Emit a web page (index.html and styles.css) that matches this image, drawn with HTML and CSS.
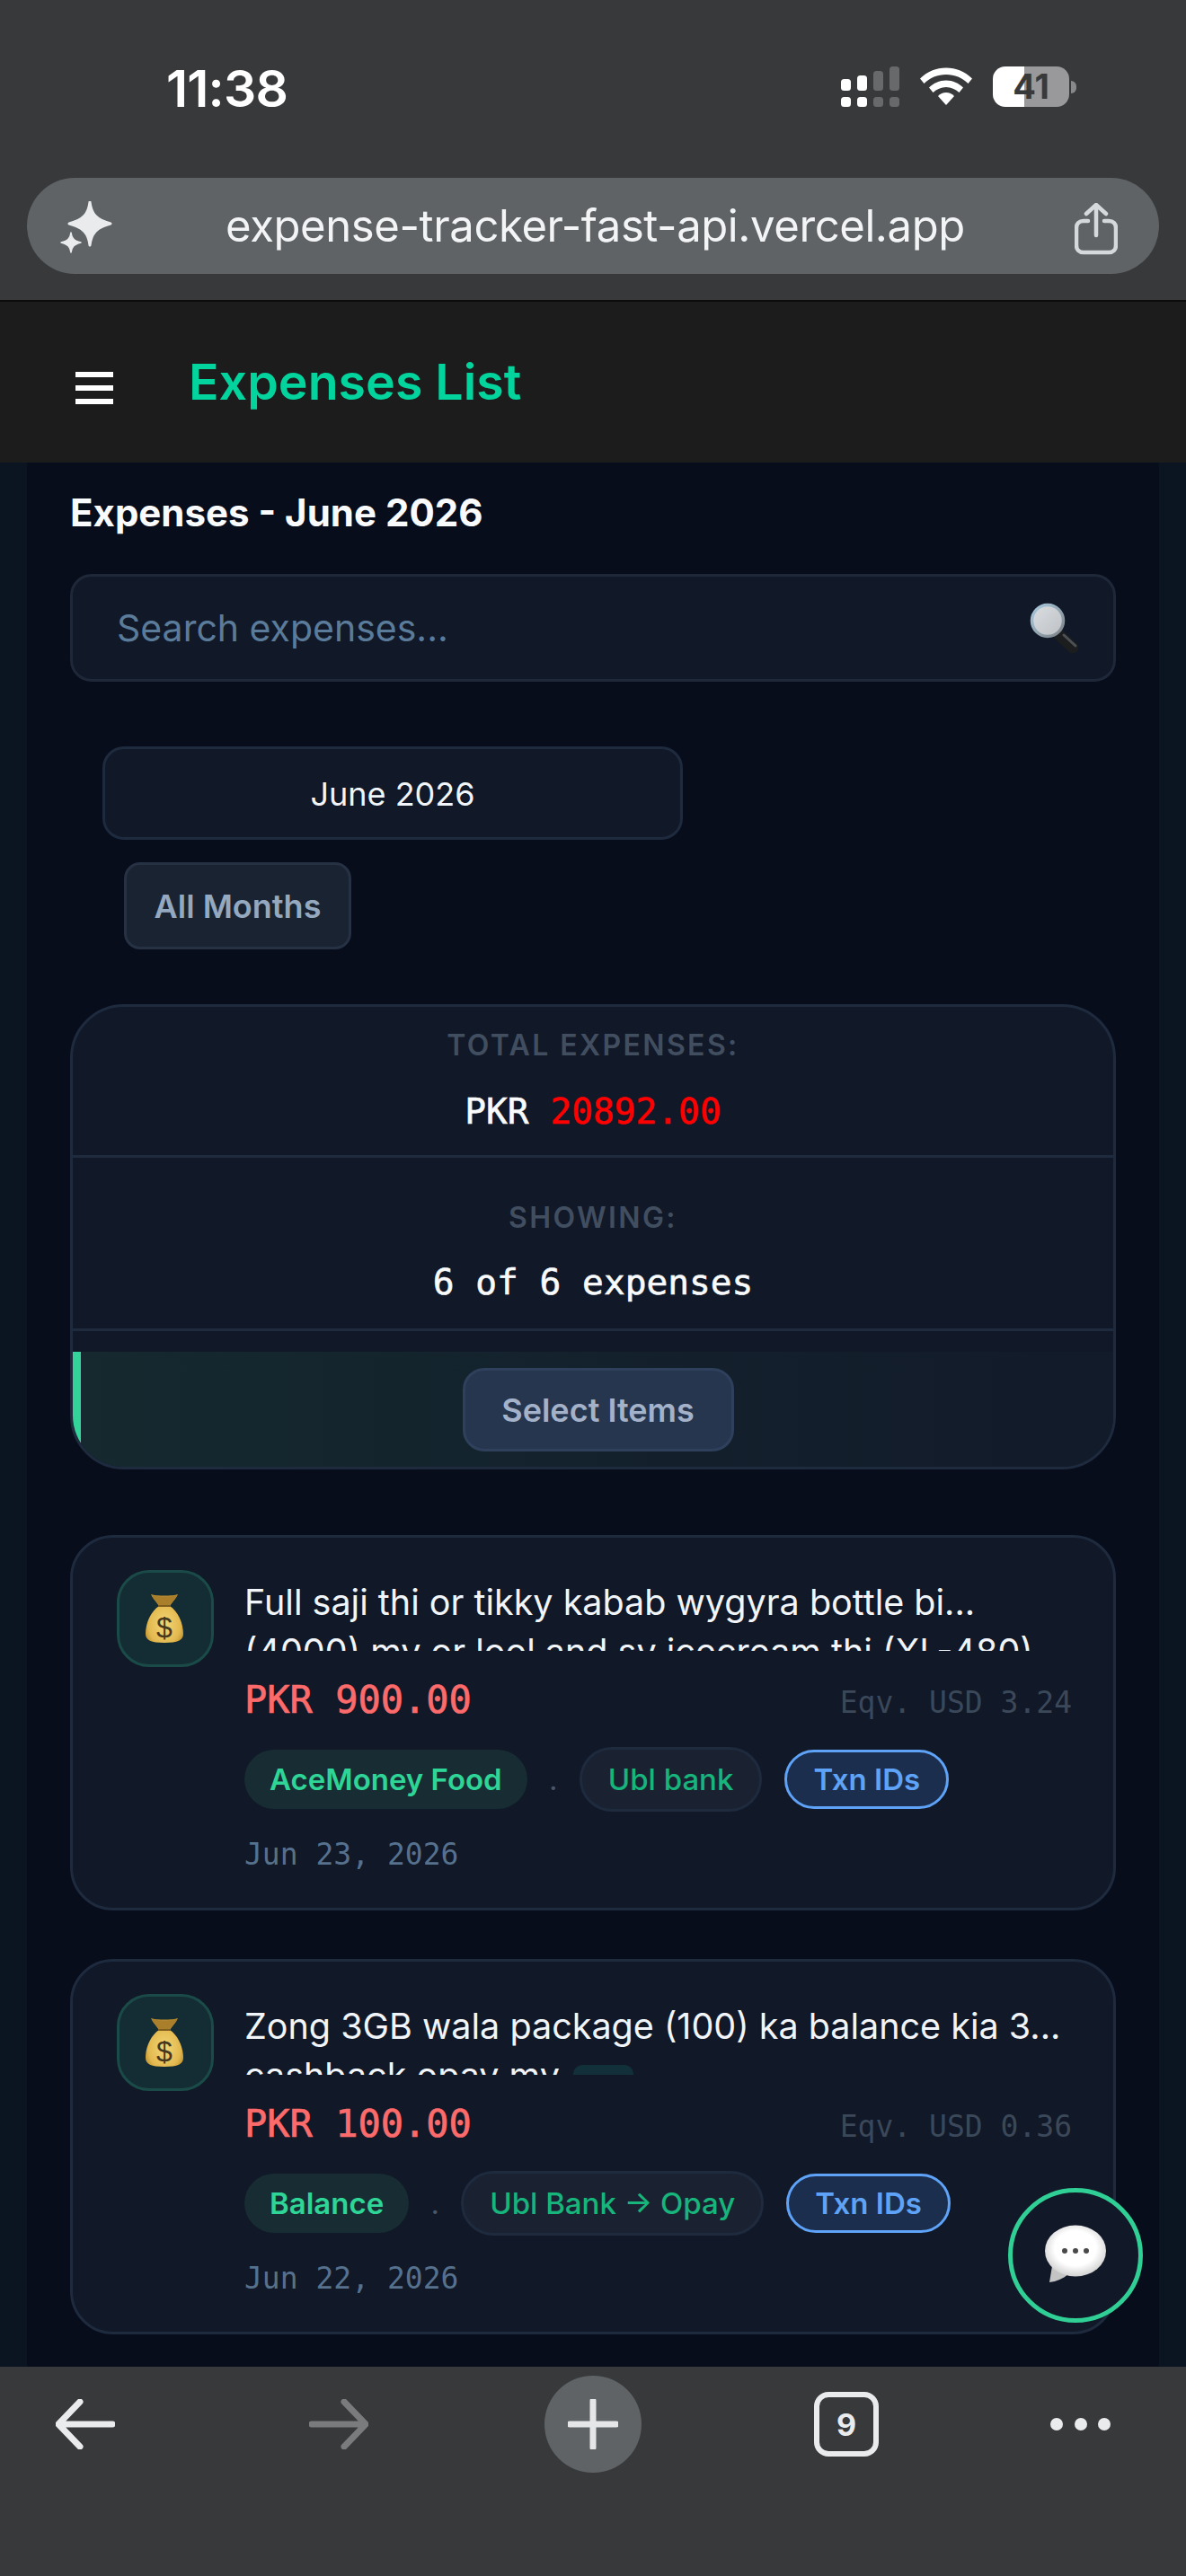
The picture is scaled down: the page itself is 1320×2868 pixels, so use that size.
FILE: index.html
```html
<!DOCTYPE html>
<html lang="en">
<head>
<meta charset="utf-8">
<title>Expenses List</title>
<link rel="stylesheet" href="styles.css">
</head>
<body>
<div class="phone">
  <section class="browser-top">
    <div class="statusbar">
      <span class="time">11:38</span>
      <div class="status-icons">
        <svg class="signal" width="65" height="45" viewBox="0 0 65 45">
          <rect x="0" y="14" width="11" height="13" rx="3.5" fill="#fff"/>
          <rect x="18" y="10" width="11" height="17" rx="3.5" fill="#fff"/>
          <rect x="36" y="5" width="11" height="22" rx="3.5" fill="#67696b"/>
          <rect x="54" y="0" width="11" height="27" rx="3.5" fill="#67696b"/>
          <rect x="0" y="34" width="11" height="11" rx="3.5" fill="#fff"/>
          <rect x="18" y="34" width="11" height="11" rx="3.5" fill="#fff"/>
          <rect x="36" y="34" width="11" height="11" rx="3.5" fill="#67696b"/>
          <rect x="54" y="34" width="11" height="11" rx="3.5" fill="#67696b"/>
        </svg>
        <svg class="wifi" width="58" height="42" viewBox="0 0 58 42">
          <path d="M0 12.5C8 4.5 18 0.5 29 0.5S50 4.500 58 12.500L53.500 18C47 11.500 38.500 8 29 8S11 11.500 4.500 18Z" fill="#fff"/>
          <path d="M10 22.500C15 17.500 21.500 14.500 29 14.500S43 17.500 48 22.500L43.500 28C39.500 24.500 34.500 22 29 22S18.500 24.500 14.500 28Z" fill="#fff"/>
          <path d="M20 32C22.500 29.500 25.500 28 29 28S35.500 29.500 38 32L29 42Z" fill="#fff"/>
        </svg>
        <div class="battery">
          <div class="battery-body"><span class="battery-level">41</span></div>
          <span class="battery-nub"></span>
        </div>
      </div>
    </div>
    <div class="urlbar">
      <svg class="sparkle" width="62" height="62" viewBox="0 0 62 62">
        <path d="M33 1C34.500 14 40 21 56 25C40 29 34.500 36 33 49C31.500 36 26 29 10 25C26 21 31.500 14 33 1Z" fill="#e9ebed" stroke="#e9ebed" stroke-width="3" stroke-linejoin="round"/>
        <path d="M12 35C12.800 41 15 44 23 46C15 48 12.800 51 12 57C11.200 51 9 48 1 46C9 44 11.200 41 12 35Z" fill="#e9ebed" stroke="#e9ebed" stroke-width="1.500" stroke-linejoin="round"/>
      </svg>
      <span class="url">expense-tracker-fast-api.vercel.app</span>
      <svg class="share" width="48" height="58" viewBox="0 0 48 58">
        <path d="M15 20H10C5 20 2 23 2 28V47C2 52 5 55 10 55H38C43 55 46 52 46 47V28C46 23 43 20 38 20H33" fill="none" stroke="#d6d9db" stroke-width="4.500" stroke-linecap="round"/>
        <path d="M24 36V3M13 12L24 2L35 12" fill="none" stroke="#d6d9db" stroke-width="4.500" stroke-linecap="round" stroke-linejoin="round"/>
      </svg>
    </div>
  </section>

  <header class="app-header">
    <div class="hamburger"><span></span><span></span><span></span></div>
    <h1 class="app-title">Expenses List</h1>
  </header>

  <main class="viewport">
    <div class="content">
      <h2 class="page-title">Expenses - June 2026</h2>

      <div class="search">
        <span class="search-placeholder">Search expenses...</span>
        <svg class="magnifier" width="56" height="56" viewBox="0 0 56 56">
          <defs>
            <linearGradient id="lens" x1="0" y1="0" x2="1" y2="1">
              <stop offset="0" stop-color="#dcdfe2"/>
              <stop offset="1" stop-color="#bcbfc3"/>
            </linearGradient>
            <linearGradient id="rim" x1="0" y1="0" x2="1" y2="1">
              <stop offset="0" stop-color="#a9cbe0"/>
              <stop offset="1" stop-color="#7d8186"/>
            </linearGradient>
          </defs>
          <path d="M33 36L48 50" stroke="#1b1d1f" stroke-width="13" stroke-linecap="round"/>
          <path d="M38 36L51 48" stroke="#4e5154" stroke-width="3" stroke-linecap="round"/>
          <circle cx="20" cy="20" r="17.500" fill="url(#lens)" stroke="url(#rim)" stroke-width="3.500"/>
        </svg>
      </div>

      <div class="month-select">June 2026</div>
      <button class="all-months">All Months</button>

      <section class="summary">
        <div class="summary-cell summary-total">
          <div class="summary-label">TOTAL EXPENSES:</div>
          <div class="summary-value">PKR <span class="summary-red">20892.00</span></div>
        </div>
        <div class="summary-cell summary-showing">
          <div class="summary-label">SHOWING:</div>
          <div class="summary-value">6 of 6 expenses</div>
        </div>
        <div class="summary-actions">
          <button class="select-items">Select Items</button>
        </div>
      </section>

      <article class="expense">
        <div class="expense-icon">
          <svg class="bag" width="42" height="56" viewBox="0 0 42 56">
            <defs>
              <radialGradient id="bagfill" cx="0.5" cy="0.62" r="0.6">
                <stop offset="0" stop-color="#f3d777"/>
                <stop offset="0.7" stop-color="#e3b94f"/>
                <stop offset="1" stop-color="#b78a2c"/>
              </radialGradient>
            </defs>
            <path d="M6 1C12 3 30 3 36 1C34 6 30 9 27 14C36 20 42 33 42 45C42 52 36 55 21 55C6 55 0 52 0 45C0 33 6 20 15 14C12 9 8 6 6 1Z" fill="url(#bagfill)"/>
            <path d="M7 2C13 4 29 4 35 2C33 7 29 10 27 14H15C13 10 9 7 7 2Z" fill="#a97f2b"/>
            <path d="M14 14H28" stroke="#7f5d1f" stroke-width="2"/>
            <text class="bag-dollar" x="21" y="49" text-anchor="middle">$</text>
          </svg>
        </div>
        <div class="expense-body">
          <div class="expense-title">
            <div class="title-line">Full saji thi or tikky kabab wygyra bottle bi...</div>
            <div class="title-line">(4000) my or lool and sy icecream thi (XL-480)</div>
          </div>
          <div class="amount-row">
            <span class="amount">PKR 900.00</span>
            <span class="eqv">Eqv. USD 3.24</span>
          </div>
          <div class="tags">
            <span class="tag tag-cat">AceMoney Food</span>
            <span class="tag-dot">.</span>
            <span class="tag tag-acct">Ubl bank</span>
            <span class="tag tag-txn">Txn IDs</span>
          </div>
          <div class="date">Jun 23, 2026</div>
        </div>
      </article>

      <article class="expense">
        <div class="expense-icon">
          <svg class="bag" width="42" height="56" viewBox="0 0 42 56">
            <path d="M6 1C12 3 30 3 36 1C34 6 30 9 27 14C36 20 42 33 42 45C42 52 36 55 21 55C6 55 0 52 0 45C0 33 6 20 15 14C12 9 8 6 6 1Z" fill="url(#bagfill)"/>
            <path d="M7 2C13 4 29 4 35 2C33 7 29 10 27 14H15C13 10 9 7 7 2Z" fill="#a97f2b"/>
            <path d="M14 14H28" stroke="#7f5d1f" stroke-width="2"/>
            <text class="bag-dollar" x="21" y="49" text-anchor="middle">$</text>
          </svg>
        </div>
        <div class="expense-body">
          <div class="expense-title">
            <div class="title-line">Zong 3GB wala package (100) ka balance kia 3...</div>
            <div class="title-line">cashback opay my <span class="title-chip"></span></div>
          </div>
          <div class="amount-row">
            <span class="amount">PKR 100.00</span>
            <span class="eqv">Eqv. USD 0.36</span>
          </div>
          <div class="tags">
            <span class="tag tag-cat">Balance</span>
            <span class="tag-dot">.</span>
            <span class="tag tag-acct">Ubl Bank → Opay</span>
            <span class="tag tag-txn">Txn IDs</span>
          </div>
          <div class="date">Jun 22, 2026</div>
        </div>
      </article>
    </div>

    <button class="chat-fab" aria-label="Chat">
      <svg width="70" height="68" viewBox="0 0 70 68">
        <defs>
          <radialGradient id="bubble" cx="0.5" cy="0.45" r="0.62">
            <stop offset="0.55" stop-color="#ffffff"/>
            <stop offset="1" stop-color="#c4c4c4"/>
          </radialGradient>
        </defs>
        <path d="M9 46L6 64C14 63 21 60 27 55Z" fill="#c4c4c4"/>
        <ellipse cx="35" cy="29" rx="34" ry="28.500" fill="url(#bubble)"/>
        <circle cx="23" cy="29" r="3" fill="#4a4a4a"/>
        <circle cx="35" cy="29" r="3" fill="#4a4a4a"/>
        <circle cx="47" cy="29" r="3" fill="#4a4a4a"/>
      </svg>
    </button>
  </main>

  <nav class="toolbar">
    <svg class="tb-back" width="66" height="56" viewBox="0 0 66 56">
      <path d="M63 28H4M27 3L3 28L27 53" fill="none" stroke="#e9ebed" stroke-width="7" stroke-linecap="round" stroke-linejoin="round"/>
    </svg>
    <svg class="tb-forward" width="66" height="56" viewBox="0 0 66 56">
      <path d="M3 28H62M39 3L63 28L39 53" fill="none" stroke="#7a7b7d" stroke-width="7" stroke-linecap="round" stroke-linejoin="round"/>
    </svg>
    <div class="tb-plus">
      <svg width="56" height="56" viewBox="0 0 56 56">
        <path d="M28 2V54M2 28H54" stroke="#e4e6e8" stroke-width="7" stroke-linecap="round"/>
      </svg>
    </div>
    <div class="tb-tabs">9</div>
    <div class="tb-dots"><span></span><span></span><span></span></div>
  </nav>
</div>
</body>
</html>
```

FILE: styles.css
```css
* { box-sizing: border-box; }
html, body { margin: 0; padding: 0; background: #38393b; }
body { font-family: Inter, "Liberation Sans", sans-serif; }
button { font-family: inherit; margin: 0; }

.phone {
  width: 1320px;
  height: 2868px;
  display: flex;
  flex-direction: column;
  overflow: hidden;
}

/* Browser chrome, top */
.browser-top {
  height: 336px;
  background: #38393b;
  border-bottom: 2px solid #0c0c0c;
  flex: none;
}
.statusbar {
  height: 198px;
  display: flex;
  align-items: flex-start;
  padding: 66px 122px 0 185px;
}
.time {
  font-size: 57px;
  font-weight: 600;
  line-height: 66px;
  color: #fff;
  letter-spacing: -0.8px;
}
.status-icons {
  margin-left: auto;
  display: flex;
  align-items: flex-start;
  padding-top: 8px;
}
.wifi { margin-left: 23px; margin-top: 1px; }
.battery {
  margin-left: 23px;
  display: flex;
  align-items: center;
  height: 45px;
}
.battery-body {
  width: 85px;
  height: 45px;
  border-radius: 14px;
  background: linear-gradient(90deg, #fff 0 41%, #99999b 41% 100%);
  text-align: center;
  font-size: 38px;
  font-weight: 700;
  line-height: 45px;
  color: #38393b;
}
.battery-nub {
  width: 6px;
  height: 14px;
  margin-left: 2px;
  background: #88898b;
  border-radius: 0 7px 7px 0;
}
.urlbar {
  margin: 0 30px;
  height: 107px;
  border-radius: 54px;
  background: #5f6366;
  display: flex;
  align-items: center;
  padding: 0 46px 0 37px;
}
.sparkle { flex: none; margin-top: 6px; }
.url {
  flex: 1;
  text-align: center;
  font-size: 49px;
  line-height: 60px;
  color: #f3f4f5;
  white-space: nowrap;
  letter-spacing: -0.4px;
}
.share { flex: none; margin-top: 6px; }

/* App header */
.app-header {
  height: 179px;
  flex: none;
  background: #1c1c1c;
  display: flex;
  align-items: flex-start;
  padding-left: 84px;
}
.hamburger {
  width: 42px;
  margin-top: 78px;
  display: flex;
  flex-direction: column;
  gap: 9px;
}
.hamburger span { display: block; height: 6px; background: #fff; }
.app-title {
  margin: 55px 0 0 84px;
  font-size: 55.500px;
  line-height: 68px;
  font-weight: 600;
  color: #03d39c;
}

/* Page */
.viewport {
  flex: 1;
  min-height: 0;
  position: relative;
  background: #0b1522;
  padding: 0 30px;
  overflow: hidden;
}
.content {
  height: 100%;
  background: #080d1b;
  padding: 30px 48px 0;
  overflow: hidden;
}
.page-title {
  margin: 0;
  font-size: 42px;
  line-height: 52px;
  font-weight: 700;
  color: #f8fafc;
}
.search {
  margin-top: 42px;
  height: 120px;
  border: 3px solid #1e2838;
  border-radius: 24px;
  background: #111827;
  display: flex;
  align-items: center;
  padding: 0 37px 0 49px;
}
.search-placeholder {
  flex: 1;
  font-size: 41px;
  color: #5a7b99;
}
.magnifier { flex: none; }
.month-select {
  margin: 72px 0 0 36px;
  width: 646px;
  height: 104px;
  border: 3px solid #1e2a3e;
  border-radius: 24px;
  background: #111827;
  color: #f1f5f9;
  font-size: 36px;
  line-height: 101px;
  text-align: center;
}
.all-months {
  display: block;
  margin: 25px 0 0 60px;
  width: 253px;
  height: 97px;
  border: 3px solid #263143;
  border-radius: 18px;
  background: #1a2332;
  color: #94a8bf;
  font-size: 36px;
  font-weight: 600;
  padding: 0;
}

/* Summary */
.summary {
  margin-top: 61px;
  height: 518px;
  border: 3px solid #1e2a3e;
  border-radius: 60px;
  background: #111827;
  overflow: hidden;
  display: flex;
  flex-direction: column;
}
.summary-cell { text-align: center; border-bottom: 3px solid #1e2a3e; }
.summary-total { height: 168px; padding-top: 23px; }
.summary-showing { height: 193px; padding-top: 47px; }
.summary-label {
  font-size: 32px;
  line-height: 40px;
  font-weight: 600;
  letter-spacing: 2.400px;
  color: #414e60;
}
.summary-value {
  font-family: "DejaVu Sans Mono", "Liberation Mono", monospace;
  font-size: 39.500px;
  line-height: 50px;
  color: #f8fafc;
  -webkit-text-stroke: 0.6px currentColor;
}
.summary-total .summary-value { margin-top: 28px; }
.summary-showing .summary-value { margin-top: 26px; }
.summary-red { color: #ff0000; }
.summary-actions {
  margin-top: 23px;
  flex: 1;
  background:
    linear-gradient(#34d399, #34d399) left top / 9px 100% no-repeat,
    linear-gradient(90deg, #15292f, #121b2a 92%);
  display: flex;
  justify-content: center;
  padding: 18px 0 0 11px;
}
.select-items {
  width: 302px;
  height: 93px;
  border: 3px solid #2f405c;
  border-radius: 24px;
  background: #27364f;
  color: #a3b2c9;
  font-size: 36px;
  font-weight: 600;
  padding: 0;
}

/* Expense cards */
.expense {
  margin-top: 54px;
  height: 418px;
  border: 3px solid #1e2a3e;
  border-radius: 48px;
  background: #111827;
  display: flex;
  padding: 36px 46px 0 49px;
  gap: 34px;
}
.summary + .expense { margin-top: 73px; }
.expense-icon {
  flex: none;
  width: 108px;
  height: 108px;
  border: 3px solid #1a4b48;
  border-radius: 36px;
  background: #142c33;
  display: flex;
  align-items: center;
  justify-content: center;
}
.bag { margin-right: 3px; }
.bag-dollar {
  font-family: "Liberation Sans", sans-serif;
  font-size: 32px;
  fill: #46371f;
}
.expense-body { flex: 1; min-width: 0; }
.expense-title {
  margin-top: 9px;
  height: 81px;
  overflow: hidden;
  color: #f1f5f9;
  font-size: 39.500px;
}
.title-line {
  height: 55px;
  line-height: 55px;
  white-space: nowrap;
}
.title-chip {
  display: inline-block;
  width: 67px;
  height: 40px;
  margin-left: 4px;
  vertical-align: -14px;
  border-radius: 10px;
  background: #12303a;
}
.amount-row {
  margin-top: 25px;
  height: 60px;
  display: flex;
  align-items: baseline;
  justify-content: space-between;
  font-family: "DejaVu Sans Mono", "Liberation Mono", monospace;
}
.amount {
  font-size: 42px;
  line-height: 60px;
  color: #fb6b6b;
  -webkit-text-stroke: 0.7px currentColor;
}
.eqv { font-size: 33px; color: #3b4859; }
.tags {
  margin-top: 22px;
  height: 72px;
  display: flex;
  align-items: center;
}
.tag {
  display: inline-flex;
  align-items: center;
  justify-content: center;
  border-radius: 36px;
  font-size: 33px;
  white-space: nowrap;
}
.tag-cat {
  height: 66px;
  padding: 0 28px;
  background: #172c33;
  color: #2ed596;
  font-weight: 600;
}
.tag-dot {
  width: 58px;
  text-align: center;
  color: #4a5668;
  font-size: 33px;
}
.tag-acct {
  height: 72px;
  padding: 0 29px;
  border: 3px solid #1e2a3e;
  background: #1a2231;
  color: #17b57c;
  font-weight: 500;
}
.tag-txn {
  height: 66px;
  margin-left: 25px;
  padding: 0 29px;
  border: 3px solid #5ea3f7;
  background: #1c2e4e;
  color: #5ea3f7;
  font-weight: 600;
}
.date {
  margin-top: 24px;
  font-family: "DejaVu Sans Mono", "Liberation Mono", monospace;
  font-size: 33px;
  line-height: 48px;
  color: #56718d;
}

/* Floating chat */
.chat-fab {
  position: absolute;
  left: 1122px;
  top: 1921px;
  width: 150px;
  height: 150px;
  border: 5px solid #2fcf95;
  border-radius: 50%;
  background: #111827;
  padding: 0;
  display: flex;
  align-items: center;
  justify-content: center;
}

/* Browser chrome, bottom */
.toolbar {
  height: 233px;
  flex: none;
  background: #38393b;
  display: flex;
  align-items: center;
  padding: 10px 0 115px;
}
.tb-back { flex: none; margin-left: 62px; }
.tb-forward { flex: none; margin-left: 216px; }
.tb-plus {
  flex: none;
  margin-left: 196px;
  width: 108px;
  height: 108px;
  border-radius: 50%;
  background: #5f6366;
  display: flex;
  align-items: center;
  justify-content: center;
}
.tb-tabs {
  flex: none;
  margin-left: 192px;
  width: 72px;
  height: 72px;
  border: 6px solid #e9ebed;
  border-radius: 16px;
  color: #e9ebed;
  font-size: 34px;
  font-weight: 700;
  display: flex;
  align-items: center;
  justify-content: center;
}
.tb-dots {
  flex: none;
  margin-left: 191px;
  width: 67px;
  display: flex;
  justify-content: space-between;
}
.tb-dots span {
  width: 14px;
  height: 14px;
  border-radius: 50%;
  background: #e9ebed;
}
```
